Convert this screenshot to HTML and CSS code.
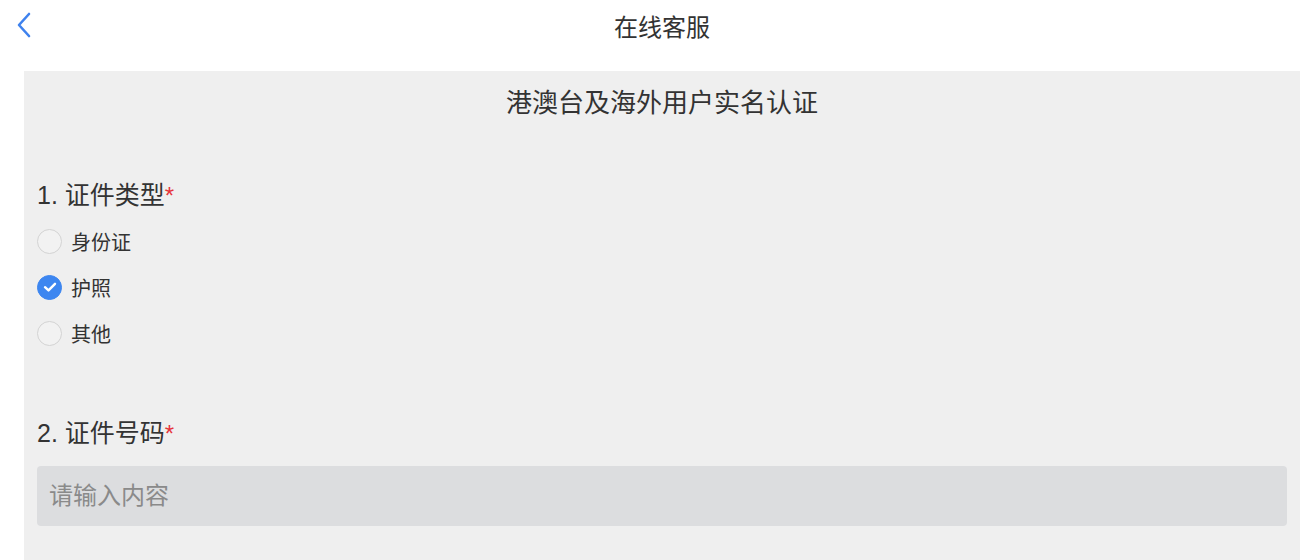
FILE: index.html
```html
<!DOCTYPE html>
<html lang="zh-CN">
<head>
    <meta charset="UTF-8">
    <meta name="viewport" content="width=device-width, initial-scale=1.0">
    <title>在线客服</title>
    <link rel="stylesheet" href="styles.css">
</head>
<body>
    <header class="nav-bar">
        <a class="nav-back" href="#">
            <svg width="16" height="26" viewBox="0 0 16 26"><path d="M13 2 L3 13 L13 24" fill="none" stroke="#3f82ee" stroke-width="2.6" stroke-linecap="round" stroke-linejoin="round"/></svg>
        </a>
        <h1 class="nav-title">在线客服</h1>
    </header>

    <main class="form-card">
        <h2 class="form-title">港澳台及海外用户实名认证</h2>

        <section class="question">
            <h3 class="question-label">1. 证件类型<span class="required">*</span></h3>
            <ul class="options">
                <li class="option"><span class="radio"></span>身份证</li>
                <li class="option"><span class="radio checked">
                    <svg width="16" height="16" viewBox="0 0 16 16"><path d="M3 8.2 L6.5 11.4 L13 4.8" fill="none" stroke="#fff" stroke-width="2.4" stroke-linecap="round" stroke-linejoin="round"/></svg>
                </span>护照</li>
                <li class="option"><span class="radio"></span>其他</li>
            </ul>
        </section>

        <section class="question">
            <h3 class="question-label">2. 证件号码<span class="required">*</span></h3>
            <input class="text-input" type="text" placeholder="请输入内容">
        </section>
    </main>
</body>
</html>
```

FILE: styles.css
```css
body {
    margin: 0;
    padding: 0;
    background: #fff;
    font-family: "Liberation Sans", "Noto Sans CJK SC", sans-serif;
    color: #333;
}

.nav-bar {
    height: 54px;
    display: flex;
    align-items: center;
    justify-content: center;
    padding-left: 12px;
    position: relative;
}

.nav-back {
    position: absolute;
    left: 16px;
    top: 12px;
    display: flex;
}

.nav-title {
    margin: 0 0 3px;
    font-size: 24px;
    font-weight: normal;
    color: #333;
}

.form-card {
    margin: 17px 12px 0 24px;
    background: #efefef;
    padding: 0 13px 34px 13px;
    min-height: 500px;
}

.form-title {
    margin: 0;
    padding: 14px 0 0;
    text-align: center;
    font-size: 26px;
    font-weight: normal;
    color: #333;
    line-height: 36px;
}

.question {
    margin-top: 58px;
}

.question + .question {
    margin-top: 61px;
}

.question-label {
    margin: 0;
    font-size: 25px;
    font-weight: normal;
    line-height: 32px;
    color: #333;
}

.required {
    color: #e6353c;
    font-size: 24px;
}

.options {
    list-style: none;
    margin: 6px 0 0;
    padding: 0;
}

.option {
    display: flex;
    align-items: center;
    height: 46px;
    font-size: 20px;
    color: #333;
}

.radio {
    width: 23px;
    height: 23px;
    border: 1px solid #d3d3d3;
    border-radius: 50%;
    background: #f2f2f2;
    margin-right: 9px;
    display: flex;
    align-items: center;
    justify-content: center;
}

.radio.checked {
    background: #3d86f0;
    border-color: #3d86f0;
}

.text-input {
    display: block;
    box-sizing: border-box;
    width: 100%;
    height: 60px;
    margin-top: 16px;
    border: none;
    border-radius: 4px;
    background: #dcdddf;
    padding: 0 12px;
    font-family: inherit;
    font-size: 24px;
    color: #333;
    outline: none;
}

.text-input::placeholder {
    color: #8a8a8a;
}
```
